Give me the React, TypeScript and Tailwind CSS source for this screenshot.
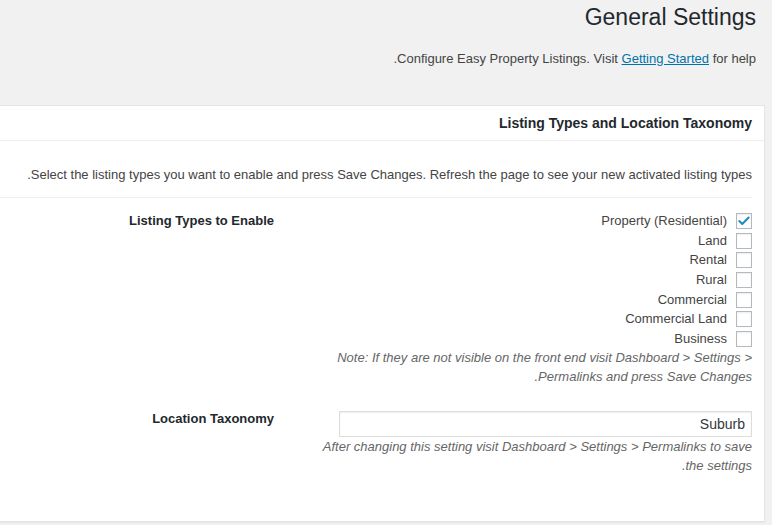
import { Check } from 'lucide-react';

const listingTypes = [
  { label: 'Property (Residential)', checked: true },
  { label: 'Land', checked: false },
  { label: 'Rental', checked: false },
  { label: 'Rural', checked: false },
  { label: 'Commercial', checked: false },
  { label: 'Commercial Land', checked: false },
  { label: 'Business', checked: false },
];

export default function App() {
  return (
    <div
      className="min-h-[525px] w-full overflow-hidden bg-[#f1f1f1] text-[#444]"
      style={{ fontFamily: '"Liberation Sans", Arial, sans-serif' }}
    >
      <div className="pr-4 pt-[3px]">
        <h1 className="text-right text-[23px] leading-[29px] text-[#23282d]">General Settings</h1>
        <p dir="rtl" className="mt-[18px] text-right text-[13px] leading-[18px] text-[#444]">
          Configure Easy Property Listings. Visit{' '}
          <a href="#" className="text-[#0073aa] underline">
            Getting Started
          </a>{' '}
          for help.
        </p>
      </div>

      <div className="-ml-px mr-[7px] mt-[37px] border border-[#e5e5e5] bg-white shadow-[0_1px_1px_rgba(0,0,0,0.04)]">
        <h3 className="h-[35px] border-b border-[#eee] pr-[12px] text-right text-[14px] font-bold leading-[35px] text-[#23282d]">
          Listing Types and Location Taxonomy
        </h3>

        <div className="mr-[12px] border-b border-[#eee] pb-[14px] pt-[25px]">
          <p dir="rtl" className="text-right text-[13px] leading-[17px]">
            Select the listing types you want to enable and press Save Changes. Refresh the page to see your new
            activated listing types.
          </p>
        </div>

        <div className="pb-[46px] pr-[12px]">
          <div className="flex pt-[12px]">
            <div className="w-[274px] shrink-0 pt-[2px] text-right text-[13px] font-bold leading-[17px] text-[#23282d]">
              Listing Types to Enable
            </div>
            <div className="flex-1">
              <div className="flex flex-col items-end gap-[3.7px] pt-[3px]">
                {listingTypes.map((t) => (
                  <label key={t.label} className="flex items-center gap-[9px] text-[13px] leading-[16px]">
                    <span>{t.label}</span>
                    <span className="flex h-[16px] w-[16px] items-center justify-center border border-[#b4b9be] bg-white shadow-[inset_0_1px_2px_rgba(0,0,0,0.07)]">
                      {t.checked && <Check className="h-[14px] w-[14px] text-[#1e8cbe]" strokeWidth={3.5} />}
                    </span>
                  </label>
                ))}
              </div>
              <p dir="rtl" className="ml-auto mt-[1px] w-[440px] text-right text-[13px] italic leading-[19px] text-[#666]">
                Note: If they are not visible on the front end visit Dashboard &gt; Settings &gt; Permalinks and press
                Save Changes.
              </p>
            </div>
          </div>

          <div className="mt-[25px] flex">
            <div className="w-[274px] shrink-0 pt-0 text-right text-[13px] font-bold leading-[15px] text-[#23282d]">
              Location Taxonomy
            </div>
            <div className="flex-1">
              <div className="pl-[65px]">
                <input
                  type="text"
                  defaultValue="Suburb"
                  dir="rtl"
                  className="h-[26px] w-full border border-[#ddd] bg-white px-[6px] text-right text-[14px] text-[#32373c] shadow-[inset_0_1px_2px_rgba(0,0,0,0.07)] outline-none"
                />
              </div>
              <p dir="rtl" className="ml-auto w-[440px] text-right text-[13px] italic leading-[19px] text-[#666]">
                After changing this setting visit Dashboard &gt; Settings &gt; Permalinks to save the settings.
              </p>
            </div>
          </div>
        </div>
      </div>
    </div>
  );
}
